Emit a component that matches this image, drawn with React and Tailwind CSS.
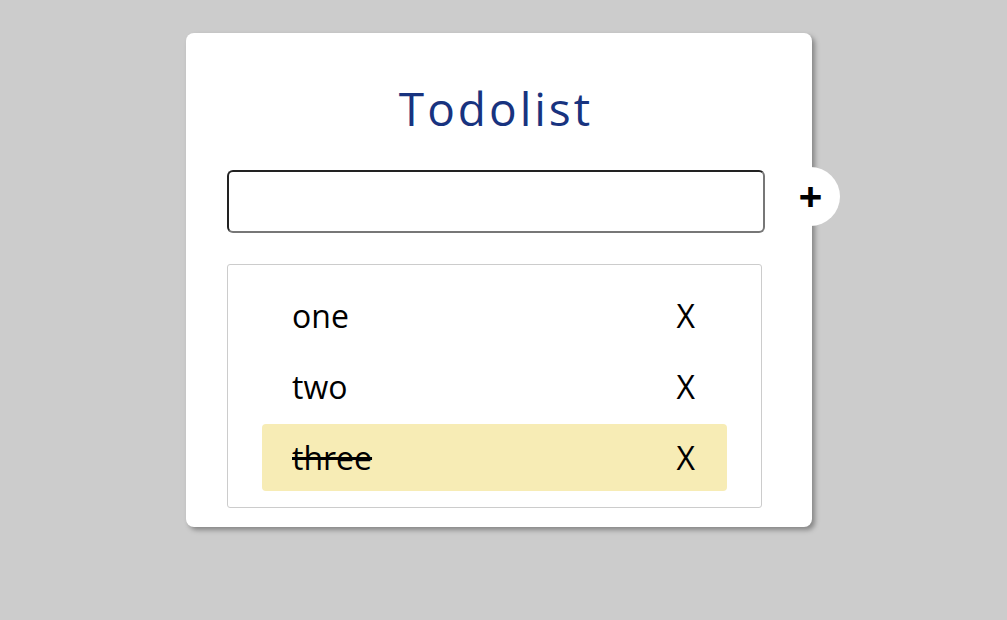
import { useState } from "react";

export default function App() {
  const [text, setText] = useState("");
  const [todos, setTodos] = useState([
    { id: 1, title: "one", done: false },
    { id: 2, title: "two", done: false },
    { id: 3, title: "three", done: true },
  ]);

  const addTodo = () => {
    if (!text.trim()) return;
    setTodos([...todos, { id: Date.now(), title: text, done: false }]);
    setText("");
  };

  const toggle = (id) =>
    setTodos(todos.map((t) => (t.id === id ? { ...t, done: !t.done } : t)));

  const remove = (id) => setTodos(todos.filter((t) => t.id !== id));

  return (
    <div
      className="h-[620px] w-full bg-[#cccccc] pt-[33px]"
      style={{ fontFamily: '"Open Sans", "Noto Sans", sans-serif' }}
    >
      <div className="ml-[186px] w-[626px] rounded-lg bg-white pl-[41px] pr-[47px] pt-[52px] pb-[19px] shadow-[3px_3px_5px_rgba(0,0,0,0.35)]">
        <h1 className="text-center text-[46px] leading-none tracking-[3px] text-[#18337f]">
          Todolist
        </h1>

        <div className="mt-[39px] flex items-center gap-4">
          <input
            type="text"
            value={text}
            onChange={(e) => setText(e.target.value)}
            onKeyDown={(e) => e.key === "Enter" && addTodo()}
            className="h-[63px] w-[538px] shrink-0 rounded-md border-2 border-t-[#222] border-l-[#222] border-b-[#777] border-r-[#777] px-3 text-2xl outline-none"
          />
          <button
            onClick={addTodo}
            className="-mt-[11px] flex h-[59px] w-[59px] shrink-0 items-center justify-center rounded-full bg-white text-[42px] font-bold leading-none text-black"
          >
            +
          </button>
        </div>

        <ul className="mt-[31px] flex w-[535px] flex-col gap-1 rounded-[3px] border border-[#cccccc] px-[34px] pt-[17px] pb-4">
          {todos.map((t) => (
            <li
              key={t.id}
              onClick={() => toggle(t.id)}
              className={`flex h-[67px] cursor-pointer items-center justify-between rounded pl-[30px] pr-[32px] text-[32px] text-black ${
                t.done ? "bg-[#f7ecb5]" : ""
              }`}
            >
              <span className={t.done ? "line-through" : ""}>{t.title}</span>
              <span
                onClick={(e) => {
                  e.stopPropagation();
                  remove(t.id);
                }}
              >
                X
              </span>
            </li>
          ))}
        </ul>
      </div>
    </div>
  );
}
